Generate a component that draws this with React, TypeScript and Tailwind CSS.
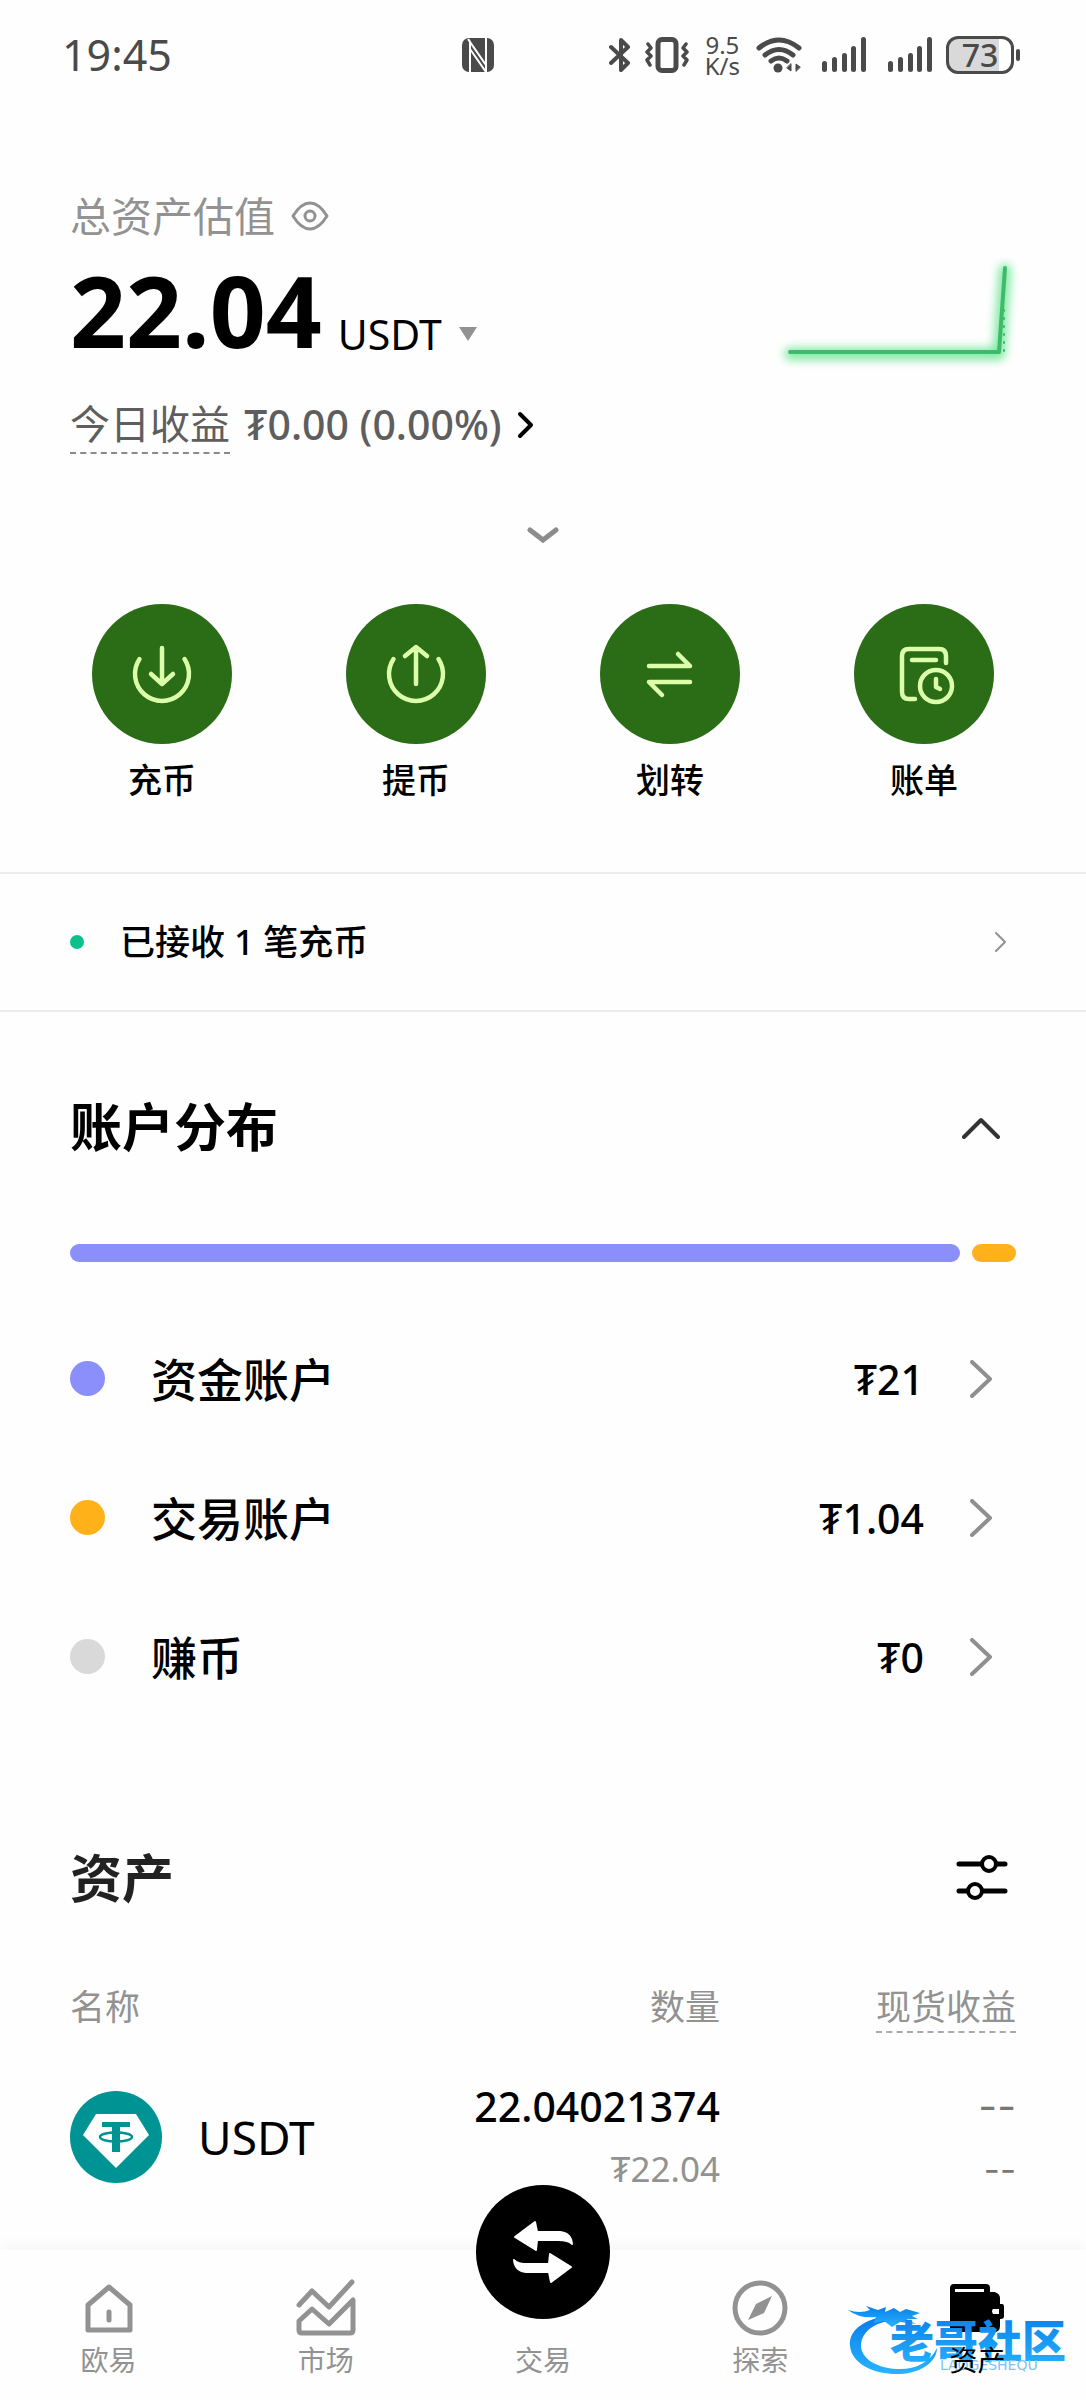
import React, { useState } from "react";

interface Account {
  id: number;
  name: string;
  value: number;
  dot: string;
}

const accounts: Account[] = [
  { id: 1, name: "资金账户", value: 21, dot: "bg-[#8a8ffb]" },
  { id: 2, name: "交易账户", value: 1.04, dot: "bg-[#ffb119]" },
  { id: 3, name: "赚币", value: 0, dot: "bg-[#d9d9d9]" },
];

const SignalBars = () => (
  <svg width="44" height="36" viewBox="0 0 44 36" fill="#4a4a4a">
    <rect x="0" y="24" width="5" height="11" rx="2.5" />
    <rect x="10" y="20" width="5" height="15" rx="2.5" />
    <rect x="20" y="16" width="5" height="19" rx="2.5" />
    <rect x="29" y="9" width="5" height="26" rx="2.5" />
    <rect x="39" y="0" width="5" height="35" rx="2.5" />
  </svg>
);

const StatusBar = () => (
  <header className="flex h-[110px] items-center pr-[66px] pl-[62px] text-[#4a4a4a]">
    <div className="w-5/12 text-[43px] leading-[48px]">19:45</div>
    <svg className="shrink-0" width="34" height="34" viewBox="0 0 34 34" fill="none">
      <rect x="1" y="0" width="32" height="34" rx="7" fill="#4a4a4a" />
      <path d="M9 34V4L25 27V0" stroke="#fefefe" strokeWidth="2" />
      <path d="M9 4L7 1M9 11L25 34M25 27V34" stroke="#fefefe" strokeWidth="2" />
    </svg>
    <div className="flex flex-1 items-center justify-end">
      <svg width="22" height="36" viewBox="0 0 22 36" fill="none" stroke="#4a4a4a" strokeWidth="4" strokeLinecap="round" strokeLinejoin="round">
        <path d="M2 10L19 26L12 33V3L19 10L2 26" />
      </svg>
      <svg className="ml-[14px]" width="44" height="36" viewBox="0 0 44 36" fill="none" stroke="#4a4a4a" strokeLinecap="round" strokeLinejoin="round">
        <rect x="13" y="2.5" width="18" height="31" rx="4" strokeWidth="5" />
        <path d="M3 7L6 11L2 15L6 19L2 23L5 28M41 7L38 11L42 15L38 19L42 23L39 28" strokeWidth="3.5" />
      </svg>
      <div className="ml-4 text-center text-[24px] leading-[21px]">
        <div>9.5</div>
        <div>K/s</div>
      </div>
      <svg className="ml-4" width="46" height="36" viewBox="0 0 46 36" fill="none" stroke="#4a4a4a" strokeWidth="5" strokeLinecap="round">
        <path d="M3 11Q23 -5 43 11" />
        <path d="M9 18Q23 7 37 18" />
        <path d="M15 24Q23 18 31 24" />
        <circle cx="22" cy="31" r="4.5" fill="#4a4a4a" stroke="none" />
        <path d="M35 27V34L31 31ZM40 34V27L44 30Z" fill="#4a4a4a" strokeWidth="1" />
      </svg>
      <div className="ml-5 flex items-center gap-[22px]">
        <SignalBars />
        <SignalBars />
      </div>
      <div className="ml-[14px] flex h-[38px] w-[68px] items-center justify-center rounded-[12px] border-[3px] border-[#4a4a4a] bg-linear-to-r from-[#d9d9d9] from-80% to-white to-80% text-[32px] leading-[32px] font-medium">
        73
      </div>
      <div className="ml-[2px] h-3 w-1 rounded-full bg-[#4a4a4a]" />
    </div>
  </header>
);

const ProfitChart = () => (
  <svg className="mt-[66px] -mr-4 shrink-0" width="260" height="140" viewBox="0 0 260 140" fill="none" strokeLinecap="round" strokeLinejoin="round">
    <defs>
      <filter id="glow" x="-20%" y="-30%" width="140%" height="160%">
        <feGaussianBlur stdDeviation="5" />
      </filter>
    </defs>
    <path d="M18 96H227L233 12" stroke="#7be8a0" strokeWidth="12" filter="url(#glow)" />
    <path d="M232 52V96" stroke="#3dbb6b" strokeWidth="2" strokeDasharray="1 7" />
    <path d="M18 94H227L233 10" stroke="#3dbb6b" strokeWidth="4" />
  </svg>
);

const ChevronRight = () => (
  <svg width="22" height="38" viewBox="0 0 22 38" fill="none" stroke="#8f8f8f" strokeWidth="4" strokeLinecap="round" strokeLinejoin="round">
    <path d="M2 2L20 19L2 36" />
  </svg>
);

const actions = [
  {
    label: "充币",
    icon: <path d="M13.5 21A27 27 0 1 0 58.5 21M36 10V46M25 36L36 46L47 36" />,
  },
  {
    label: "提币",
    icon: <path d="M13.5 21A27 27 0 1 0 58.5 21M36 46V10M25 18L36 9L47 18" />,
  },
  {
    label: "划转",
    icon: <path d="M15 28H56L44 16M56 44H15L28 57" />,
  },
  {
    label: "账单",
    icon: (
      <>
        <path d="M58 25V18Q58 11 51 11H21Q14 11 14 18V54Q14 61 21 61H27M24 22H48M48 41V49L52 51" />
        <circle cx="48" cy="48" r="16" />
      </>
    ),
  },
];

const TetherLogo = () => (
  <svg width="92" height="92" viewBox="0 0 92 92" fill="none">
    <circle cx="46" cy="46" r="46" fill="#009393" />
    <path d="M26 23H66L79 44L46 77L13 44Z" fill="#fff" />
    <path d="M32 31H60V36H50V61H42V36H32Z" fill="#009393" />
    <ellipse cx="46" cy="46" rx="16" ry="4.5" stroke="#009393" strokeWidth="2.5" />
  </svg>
);

const Watermark = () => (
  <svg className="pointer-events-none absolute top-[49px] right-4" width="224" height="80" viewBox="0 0 224 80">
    <defs>
      <linearGradient id="wave" x1="0" y1="0" x2="0" y2="1">
        <stop offset="0" stopColor="#0b7de8" />
        <stop offset="1" stopColor="#27b4ff" />
      </linearGradient>
    </defs>
    <g fill="url(#wave)">
      <path d="M34 18C12 24 3 34 4 47C6 66 30 76 54 75C76 74 91 62 91 49C84 64 68 71 51 70C30 69 14 59 15 45C16 34 26 25 42 22Z" />
      <path d="M2 11Q14 15 24 11L20 7L32 11L40 8L39 13L48 9L54 13L60 10L74 14L66 17L72 20L60 20L70 25L54 23L46 28L38 22L28 24L30 18Q14 20 2 11Z" />
      <text className="font-black" x="44" y="59" fontSize="44">
        老哥社区
      </text>
    </g>
    <text x="94" y="71" fontSize="14" fontFamily="DejaVu Sans, sans-serif" fill="#7cc4f5">
      LAOGESHEQU
    </text>
  </svg>
);

const NavItem = ({
  label,
  active,
  children,
}: {
  label: string;
  active?: boolean;
  children: React.ReactNode;
}) => (
  <a href="#" className="flex flex-col items-center pt-[26px]">
    <span className="flex h-16 items-center">{children}</span>
    <span
      className={
        active
          ? "relative z-10 text-[28px] leading-[40px] text-black"
          : "text-[28px] leading-[40px] text-[#929292]"
      }
    >
      {label}
    </span>
  </a>
);

const BottomNav = () => (
  <nav className="relative grid h-[151px] grid-cols-5 bg-[#fefefe] shadow-[0_-6px_12px_rgba(0,0,0,0.03)]">
    <NavItem label="欧易">
      <svg width="48" height="50" viewBox="0 0 48 50" fill="none" stroke="#929292" strokeWidth="5" strokeLinejoin="round" strokeLinecap="round">
        <path d="M24 4L45 22V47H3V22ZM24 29V37" />
      </svg>
    </NavItem>
    <NavItem label="市场">
      <svg width="60" height="58" viewBox="0 0 60 58" fill="none" stroke="#929292" strokeWidth="5" strokeLinejoin="round" strokeLinecap="round">
        <path d="M3 26L16 12L33 28L56 3" />
        <path d="M3 42L16 30L33 45L57 21V51Q57 54 54 54H6Q3 54 3 51Z" />
      </svg>
    </NavItem>
    <a href="#" className="flex flex-col items-center pt-[26px]">
      <span className="-mt-[91px] mb-[21px] flex h-[134px] w-[134px] shrink-0 items-center justify-center rounded-full bg-black">
        <svg width="68" height="68" viewBox="-34 -34 68 68" fill="#fff" stroke="#fff" strokeWidth="2" strokeLinejoin="round">
          <path d="M-28 -15L-8 -30L-6 -20H17Q28 -19 29 -8Q26 -12 15 -12H-6L-7 -2Z" />
          <path d="M28 15L8 30L6 20H-17Q-28 19 -29 8Q-26 12 -15 12H6L7 2Z" />
        </svg>
      </span>
      <span className="text-[28px] leading-[40px] text-[#929292]">交易</span>
    </a>
    <NavItem label="探索">
      <svg width="56" height="56" viewBox="-28 -28 56 56" fill="none">
        <circle r="25" stroke="#929292" strokeWidth="5" />
        <path d="M12 -12L4 5L-12 12L-4 -4Z" fill="#929292" />
      </svg>
    </NavItem>
    <NavItem label="资产" active>
      <svg width="54" height="48" viewBox="0 0 54 48" fill="#000">
        <path d="M4 0H36Q40 0 40 4V8H45Q50 10 50 14V20H52Q54 20 54 23V32Q54 35 51 35H50V42Q50 48 44 48H5Q0 48 0 43V4Q0 0 4 0Z" />
        <path d="M5 5H34V8H5ZM43 25H49V30H43Q41 27 43 25Z" fill="#fff" />
      </svg>
    </NavItem>
    <Watermark />
  </nav>
);

const App = () => {
  const [open, setOpen] = useState(true);

  return (
    <div className="bg-[#fefefe] font-['Noto_Sans','Noto_Sans_CJK_SC',sans-serif] text-black">
      <StatusBar />
      <main className="pb-[50px]">
        <section className="flex items-start justify-between px-[70px] pt-[82px]">
          <div>
            <div className="flex items-center gap-4 text-[41px] leading-[48px] text-[#929292]">
              总资产估值
              <button type="button" aria-label="隐藏资产">
                <svg width="38" height="30" viewBox="0 0 38 30" fill="none" stroke="#929292" strokeWidth="3">
                  <path d="M2 15Q10 2 19 2T36 15Q28 28 19 28T2 15Z" strokeLinejoin="round" />
                  <circle cx="19" cy="15" r="5" />
                </svg>
              </button>
            </div>
            <div className="mt-[22px] flex items-end gap-4">
              <span className="text-[98px] leading-[96px] font-bold">22.04</span>
              <button type="button" className="flex items-center gap-4 text-[41px] leading-[48px]">
                USDT
                <svg width="20" height="14" viewBox="0 0 20 14" fill="#929292">
                  <path d="M1 0H19L10 14Z" />
                </svg>
              </button>
            </div>
            <button type="button" className="mt-[42px] flex items-start gap-[14px] text-[41px] leading-[48px] text-[#5e5e5e]">
              <span className="border-b-2 border-dashed border-[#8a8a8a] pb-1 text-[40px]">今日收益</span>
              <span className="font-medium">₮0.00 (0.00%)</span>
              <svg className="mt-[11px]" width="18" height="28" viewBox="0 0 18 28" fill="none" stroke="#000" strokeWidth="4" strokeLinecap="round" strokeLinejoin="round">
                <path d="M4 3L15 14L4 25" />
              </svg>
            </button>
          </div>
          <ProfitChart />
        </section>

        <button type="button" aria-label="展开" className="mx-auto mt-[64px] block pt-[8px]">
          <svg width="32" height="20" viewBox="0 0 32 20" fill="none" stroke="#8c8c8c" strokeWidth="5" strokeLinecap="round">
            <path d="M3 4L16 14L29 4" />
          </svg>
        </button>

        <div className="mt-[58px] grid grid-cols-4 px-[35px]">
          {actions.map((item) => (
            <button type="button" key={item.label} className="flex flex-col items-center gap-4 text-[34px] leading-[40px] font-medium">
              <span className="flex h-[140px] w-[140px] items-center justify-center rounded-full bg-[#2b6c16]">
                <svg width="72" height="72" viewBox="0 0 72 72" fill="none" stroke="#dcffa9" strokeWidth="4.5" strokeLinecap="round" strokeLinejoin="round">
                  {item.icon}
                </svg>
              </span>
              {item.label}
            </button>
          ))}
        </div>

        <a href="#" className="mt-[72px] flex h-[140px] items-center border-y-2 border-[#ececec] pr-[80px] pl-[70px]">
          <span className="h-[14px] w-[14px] rounded-full bg-[#0cc18c]" />
          <span className="ml-9 flex-1 text-[35px] leading-[40px] font-medium">已接收 1 笔充币</span>
          <svg width="12" height="20" viewBox="0 0 12 20" fill="none" stroke="#929292" strokeWidth="2" strokeLinecap="round">
            <path d="M2 1L11 10L2 19" />
          </svg>
        </a>

        <section className="px-[70px] pt-[83px]">
          <div className="flex items-center justify-between pr-4">
            <h2 className="text-[52px] leading-[64px] font-bold">账户分布</h2>
            <button type="button" aria-label="收起" onClick={() => setOpen(!open)}>
              <svg width="38" height="24" viewBox="0 0 38 24" fill="none" stroke="#333" strokeWidth="4" strokeLinecap="round" strokeLinejoin="round">
                <path d="M2 22L19 5L36 22" />
              </svg>
            </button>
          </div>
          <div className="mt-[85px] flex h-[18px] gap-3">
            {accounts
              .filter((item) => item.value > 0)
              .map((item) => (
                <div
                  key={item.id}
                  className={`${item.dot} basis-0 rounded-full`}
                  style={{ flexGrow: item.value }}
                />
              ))}
          </div>
          {open && (
            <div className="mt-[47px]">
              {accounts.map((item) => (
                <a href="#" key={item.id} className="flex h-[139px] items-center pr-6">
                  <span className={`${item.dot} h-[35px] w-[35px] rounded-full`} />
                  <span className="ml-[46px] flex-1 text-[46px] leading-[56px] font-medium">{item.name}</span>
                  <span className="mr-[46px] text-[41px] leading-[56px] font-medium">₮{item.value}</span>
                  <ChevronRight />
                </a>
              ))}
            </div>
          )}
        </section>

        <section className="px-[70px] pt-[120px]">
          <div className="flex items-center justify-between pr-2">
            <h2 className="text-[52px] leading-[64px] font-bold text-[#222]">资产</h2>
            <button type="button" aria-label="筛选">
              <svg width="52" height="46" viewBox="0 0 52 46" fill="none" stroke="#000" strokeWidth="5" strokeLinecap="round">
                <path d="M3 9H24M42 9H49M3 36H10M28 36H49" />
                <circle cx="33" cy="9" r="7" strokeWidth="4" />
                <circle cx="19" cy="36" r="7" strokeWidth="4" />
              </svg>
            </button>
          </div>
          <table className="mt-[75px] w-full table-fixed">
            <thead>
              <tr className="text-[35px] leading-[44px] text-[#929292]">
                <th className="w-[30%] pb-[41px] text-left align-top font-normal">名称</th>
                <th className="pb-[41px] text-right align-top font-normal">数量</th>
                <th className="w-[296px] pb-[41px] text-right align-top font-normal">
                  <span className="inline-block border-b-2 border-dashed border-[#aaa] pb-[2px]">现货收益</span>
                </th>
              </tr>
            </thead>
            <tbody>
              <tr>
                <td>
                  <div className="flex items-center gap-9 text-[46px] leading-[56px]">
                    <TetherLogo />
                    USDT
                  </div>
                </td>
                <td className="text-right">
                  <div className="text-[41px] leading-[64px] font-medium">22.04021374</div>
                  <div className="text-[35px] leading-[62px] text-[#929292]">₮22.04</div>
                </td>
                <td className="text-right font-[Inter,sans-serif] text-[#777]">
                  <div className="text-[41px] leading-[64px]">--</div>
                  <div className="text-[35px] leading-[62px]">--</div>
                </td>
              </tr>
            </tbody>
          </table>
        </section>
      </main>
      <BottomNav />
    </div>
  );
};

export default App;
